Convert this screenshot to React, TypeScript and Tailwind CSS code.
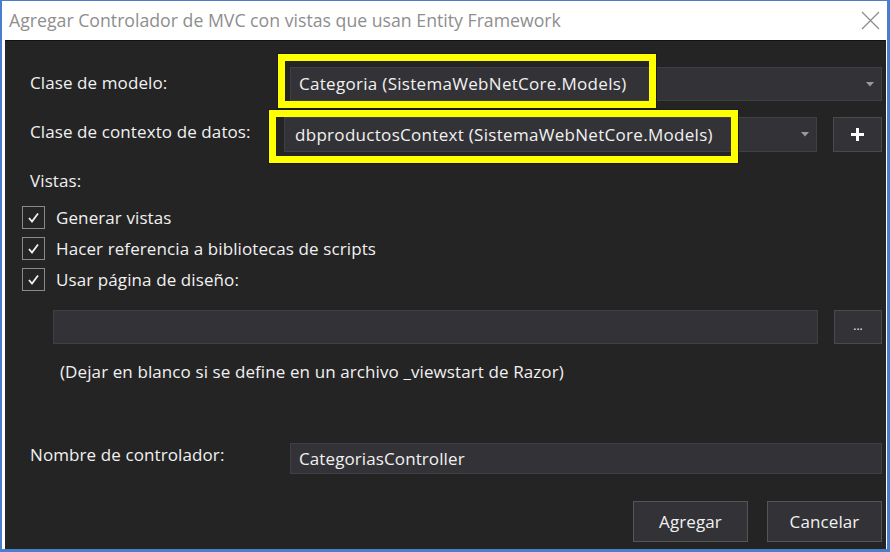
import React from "react";

function Arrow() {
  return (
    <svg width="8" height="5" viewBox="0 0 8 5" className="shrink-0">
      <path d="M0 0 L8 0 L4 4.5 Z" fill="#9a9a9a" />
    </svg>
  );
}

function Check() {
  return (
    <div className="w-[23px] h-[23px] border border-[#8a8a8a] bg-[#252526] flex items-center justify-center shrink-0">
      <svg width="13" height="13" viewBox="0 0 13 13">
        <path d="M2 7 L5 10.5 L11 2.5" fill="none" stroke="#f2f2f2" strokeWidth="1.8" />
      </svg>
    </div>
  );
}

export default function App() {
  return (
    <div
      className="w-[890px] h-[552px] bg-[#4b7dcd] pl-[2px] pt-[1px] pr-[3px] pb-[3px]"
      style={{ fontFamily: '"Open Sans", "Noto Sans", sans-serif' }}
    >
      <div className="w-full h-full bg-white flex flex-col">
        <div className="h-[39px] flex items-center justify-between pl-[7px] pr-[7px] shrink-0">
          <span className="text-[17.7px] text-[#8e8e8e]">
            Agregar Controlador de MVC con vistas que usan Entity Framework
          </span>
          <svg width="19" height="19" viewBox="0 0 19 19">
            <path d="M1 1 L18 18 M18 1 L1 18" stroke="#8a8a8a" strokeWidth="1.2" />
          </svg>
        </div>
        <div className="flex-1 bg-[#242424] ml-[3px] mr-[1px] border-t border-[#111] relative flex flex-col pl-[25px] pr-[4px] text-[17px] tracking-[0.1px] text-[#f1f1f1]">
          {/* Row 1 */}
          <div className="mt-[26px] h-[34px] flex items-center">
            <div className="w-[260px] shrink-0 -mt-[3px]">Clase de modelo:</div>
            <div className="flex-1 h-full bg-[#333337] border border-[#3f3f46] flex items-center justify-between pl-[8px] pr-[7px] tracking-[0.3px]">
              <span>Categoria (SistemaWebNetCore.Models)</span>
              <Arrow />
            </div>
          </div>
          {/* Row 2 */}
          <div className="mt-[16px] h-[35px] flex items-center">
            <div className="w-[254px] shrink-0 -mt-[5px]">Clase de contexto de datos:</div>
            <div className="w-[533px] h-full bg-[#333337] border border-[#3f3f46] flex items-center justify-between pl-[10px] pr-[7px] tracking-[0.3px]">
              <span>dbproductosContext (SistemaWebNetCore.Models)</span>
              <Arrow />
            </div>
            <div className="ml-auto w-[49px] h-full bg-[#333337] border border-[#4a4a4e] flex items-center justify-center">
              <svg width="15" height="15" viewBox="0 0 15 15">
                <path d="M7.5 1 V14 M1 7.5 H14" stroke="#ffffff" strokeWidth="3" />
              </svg>
            </div>
          </div>
          {/* Vistas */}
          <div className="mt-[19px] h-[20px] flex items-center">Vistas:</div>
          <div className="mt-[15px] flex flex-col gap-[8px] -ml-[8px]">
            {[
              "Generar vistas",
              "Hacer referencia a bibliotecas de scripts",
              "Usar página de diseño:",
            ].map((t) => (
              <div key={t} className="h-[23px] flex items-center gap-[11px]">
                <Check />
                <span>{t}</span>
              </div>
            ))}
          </div>
          {/* Layout page */}
          <div className="mt-[19px] h-[34px] flex items-center">
            <div className="ml-[23px] w-[765px] h-full bg-[#333337] border border-[#3f3f46]" />
            <div className="ml-auto w-[48px] h-full bg-[#333337] border border-[#4a4a4e] flex items-center justify-center text-[12px] tracking-[0px] leading-none pb-[2px]">
              ...
            </div>
          </div>
          <div className="mt-[18px] h-[20px] flex items-center ml-[30px]">
            (Dejar en blanco si se define en un archivo _viewstart de Razor)
          </div>
          {/* Controller name */}
          <div className="mt-[61px] h-[31px] flex items-center">
            <div className="w-[260px] shrink-0 -mt-[7px]">Nombre de controlador:</div>
            <div className="flex-1 h-full bg-[#333337] border border-[#3f3f46] flex items-center pl-[8px]">
              CategoriasController
            </div>
          </div>
          {/* Buttons */}
          <div className="mt-[27px] h-[41px] flex justify-end gap-[19px]">
            <div className="w-[115px] h-full bg-[#333337] border border-[#555558] flex items-center justify-center">
              Agregar
            </div>
            <div className="w-[115px] h-full bg-[#333337] border border-[#555558] flex items-center justify-center">
              Cancelar
            </div>
          </div>

          {/* Yellow highlight boxes */}
          <div className="absolute left-[273px] top-[13px] w-[378px] h-[54px] border-[7px] border-[#ffff00] outline outline-1 outline-[#1a1a1a]" />
          <div className="absolute left-[264px] top-[69px] w-[469px] h-[53px] border-[7px] border-[#ffff00] outline outline-1 outline-[#1a1a1a]" />
        </div>
      </div>
    </div>
  );
}
